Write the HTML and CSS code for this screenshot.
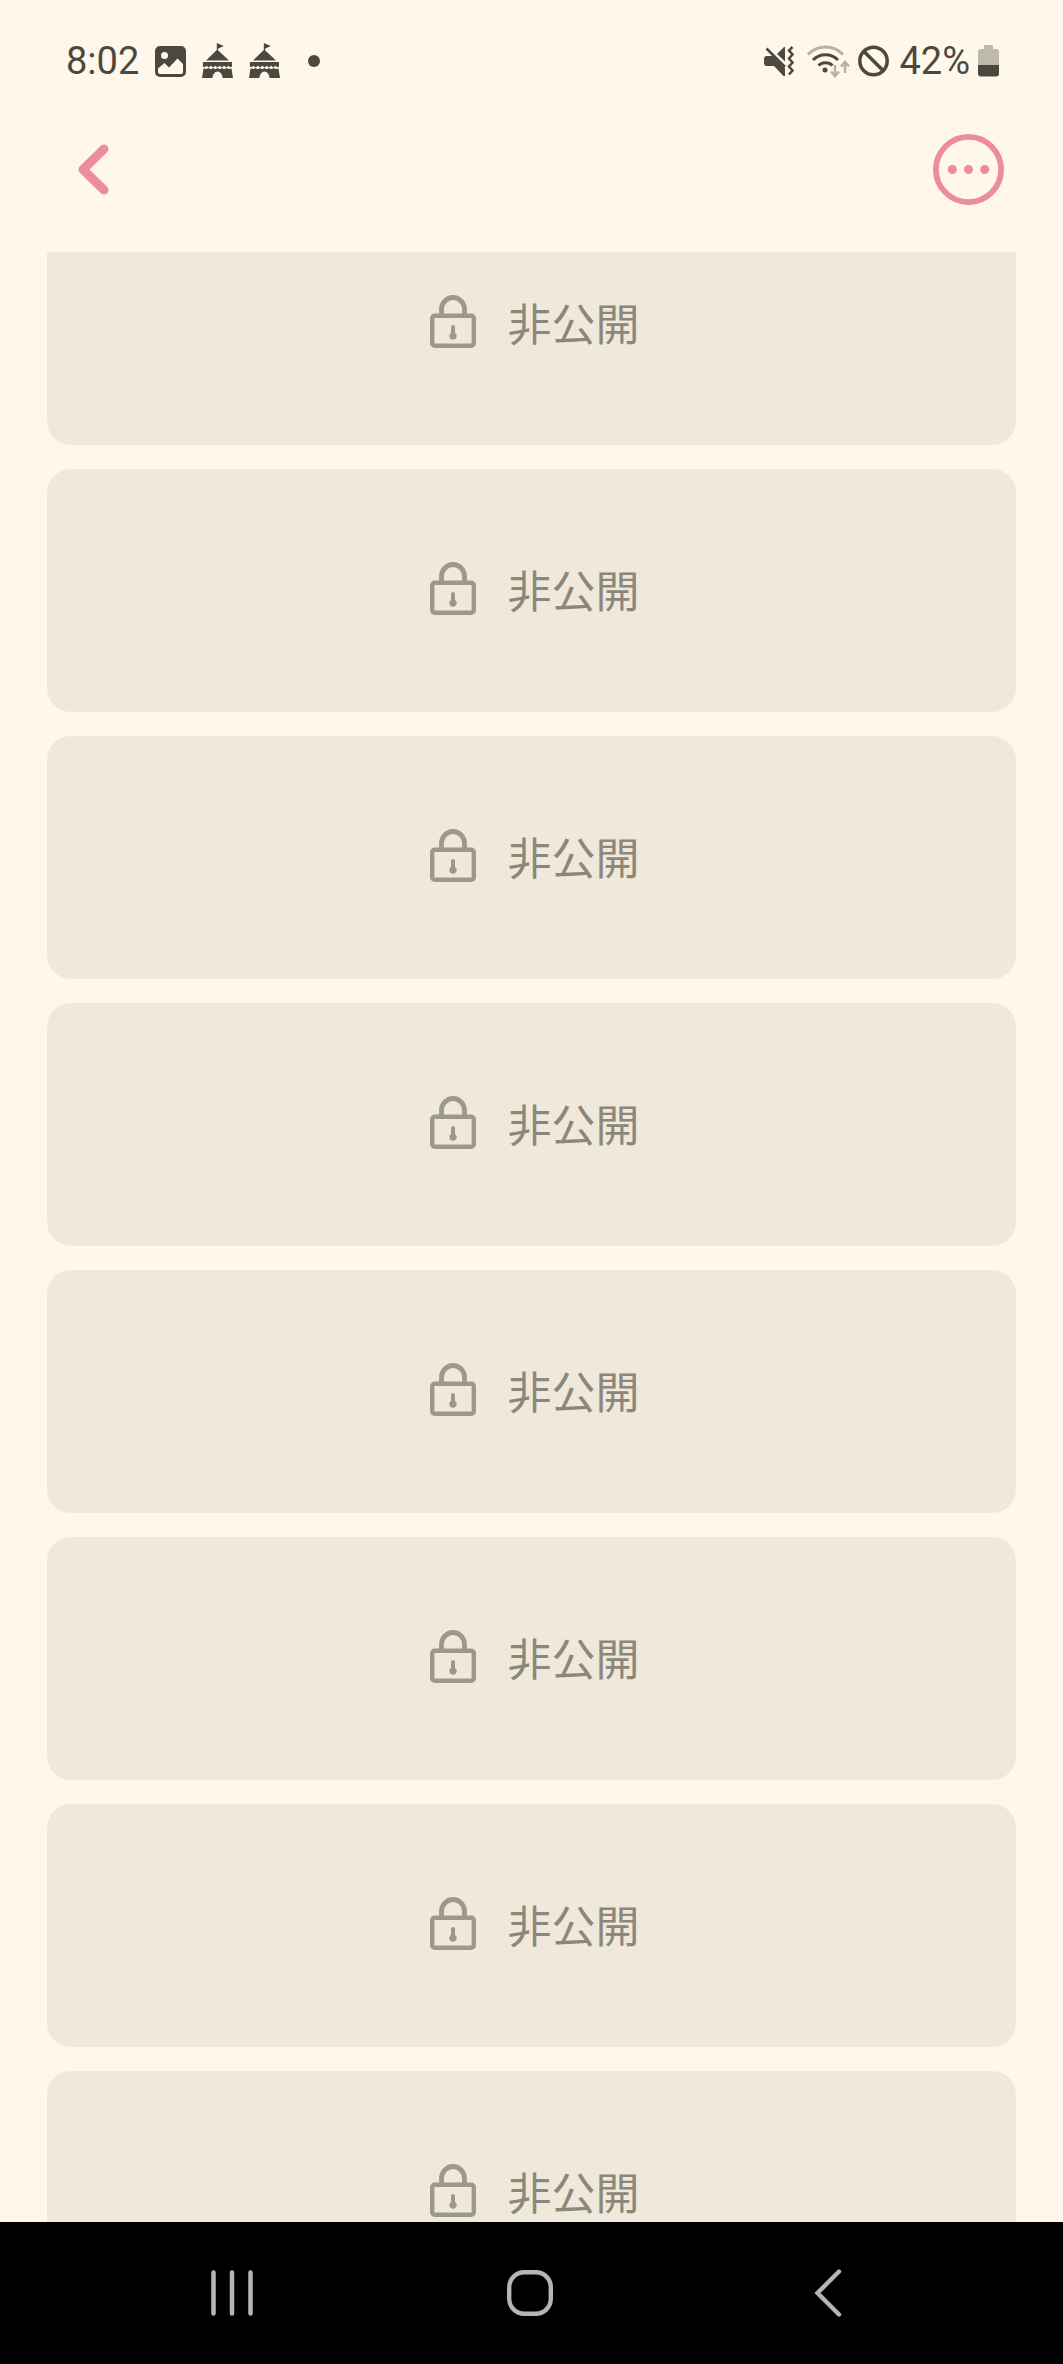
FILE: index.html
```html
<!DOCTYPE html>
<html lang="ja">
<head>
<meta charset="utf-8">
<meta name="viewport" content="width=device-width, initial-scale=1">
<title>非公開</title>
<link rel="stylesheet" href="styles.css">
</head>
<body>
<svg class="symbols" aria-hidden="true">
  <symbol id="lock" viewBox="0 0 46 53">
    <rect x="2.200" y="20.700" width="41.600" height="30" rx="2.500" fill="none" stroke="currentColor" stroke-width="4.400"/>
    <path d="M11.500 20v-5.500a11.500 12 0 0 1 23 0V20" fill="none" stroke="currentColor" stroke-width="4.800"/>
    <path d="M23 30a2 2 0 0 1 2 2v6a3.700 3.700 0 1 1-4 0v-6a2 2 0 0 1 2-2z" fill="currentColor"/>
  </symbol>
  <symbol id="tent" viewBox="0 0 31 36">
    <g fill="currentColor">
      <path d="M14.800 0l7 3-5.800 2.800v1.400l11 10.300h-23L14.800 7z"/>
      <path d="M1 19h29v4.500l-1.800.8-1.700-1.500-2.200 1.700-2.200-1.700-2.200 1.700-2.200-1.700-2.200 1.700-2.200-1.700-2.200 1.700-2.200-1.700-2.200 1.700-2.200-1.700-2 1.500-1.700-.8z"/>
      <path d="M1.500 25.500l3 .5 2-1 2.300 1.200 2.200-1.200 2.300 1.200 2.200-1.200 2.200 1.200 2.300-1.200 2.200 1.200 2.300-1.200 2 1 3-.5 1.500 9.500H20.500a5 6.500 0 0 0-10 0H0z"/>
    </g>
  </symbol>
</svg>
<div class="app">
  <div class="status">
    <div class="status-group">
      <span class="clock">8:02</span>
      <svg width="31" height="31" viewBox="0 0 31 31"><path fill="currentColor" fill-rule="evenodd" d="M5 0h21a5 5 0 0 1 5 5v21a5 5 0 0 1-5 5H5a5 5 0 0 1-5-5V5a5 5 0 0 1 5-5zM9.500 6a3.500 3.500 0 1 0 0 7 3.500 3.500 0 0 0 0-7zM3 22.500V26q0 2 2 2h21q2 0 2-2v-8l-5.500-5.500-8.500 9-4.500-4.500z"/></svg>
      <svg width="31" height="36"><use href="#tent"/></svg>
      <svg width="31" height="36"><use href="#tent"/></svg>
      <span class="more-dot"></span>
    </div>
    <div class="status-group status-right">
      <svg width="30" height="31" viewBox="0 0 30 31">
        <path fill="currentColor" d="M3 10h5.500L21 22.500V30h-1.500L10 20H3q-3 0-3-3v-4q0-3 3-3zM20 1h1v14.500L13 8z"/>
        <path fill="none" stroke="currentColor" stroke-width="2.500" d="M2.500 2.500L21 21M28.500 1l-3.500 3.500 3.500 4-3.500 4 3.500 4-3.500 4 3.500 4-3.500 4"/>
      </svg>
      <svg class="wifi" width="43" height="36" viewBox="0 0 43 36">
        <g fill="none" stroke="currentColor" stroke-width="3">
          <path class="faint" d="M1 11.500a24 24 0 0 1 35 0"/>
          <path d="M6 17a17.500 17.500 0 0 1 25 0"/>
          <path d="M11.500 22.500a10 10 0 0 1 14 0"/>
          <path class="faint" stroke-width="2.500" d="M28 22v11M24 28.500l4 4.500 4-4.500M38 30V19M34 23.500l4-4.500 4 4.500"/>
        </g>
        <circle cx="18" cy="27" r="2.500" fill="currentColor"/>
      </svg>
      <svg width="31" height="32" viewBox="0 0 31 32"><g fill="none" stroke="currentColor" stroke-width="3.500"><circle cx="15.500" cy="16" r="13.700"/><path d="M6 6.500l19 19"/></g></svg>
      <span class="percent">42%</span>
      <svg width="21" height="32" viewBox="0 0 21 32"><path class="battery-shell" d="M6 1q0-1 1-1h7q1 0 1 1v3h3q3 0 3 3v14H0V7q0-3 3-3h3z"/><path fill="currentColor" d="M0 20h21v8.500q0 3-3 3H3q-3 0-3-3z"/></svg>
    </div>
  </div>
  <header class="header">
    <button class="icon-button" aria-label="戻る"><svg width="31" height="51" viewBox="0 0 31 51"><path d="M26 5L5 25.500 26 46" fill="none" stroke="currentColor" stroke-width="9" stroke-linecap="round" stroke-linejoin="round"/></svg></button>
    <button class="icon-button" aria-label="メニュー"><svg width="71" height="71" viewBox="0 0 71 71"><circle cx="35.500" cy="35.500" r="32.600" fill="none" stroke="currentColor" stroke-width="5.800"/><g fill="currentColor"><circle cx="19.300" cy="35.500" r="4.500"/><circle cx="35.500" cy="35.500" r="4.500"/><circle cx="51.700" cy="35.500" r="4.500"/></g></svg></button>
  </header>
  <main class="viewport">
    <ul class="cards">
      <li class="card"><svg class="lock"><use href="#lock"/></svg><span>非公開</span></li>
      <li class="card"><svg class="lock"><use href="#lock"/></svg><span>非公開</span></li>
      <li class="card"><svg class="lock"><use href="#lock"/></svg><span>非公開</span></li>
      <li class="card"><svg class="lock"><use href="#lock"/></svg><span>非公開</span></li>
      <li class="card"><svg class="lock"><use href="#lock"/></svg><span>非公開</span></li>
      <li class="card"><svg class="lock"><use href="#lock"/></svg><span>非公開</span></li>
      <li class="card"><svg class="lock"><use href="#lock"/></svg><span>非公開</span></li>
      <li class="card"><svg class="lock"><use href="#lock"/></svg><span>非公開</span></li>
    </ul>
  </main>
  <nav class="navbar">
    <button class="icon-button" aria-label="履歴"><svg width="44" height="46" viewBox="0 0 44 46"><path d="M3.500 2.500v41M22 2.500v41M40.500 2.500v41" fill="none" stroke="currentColor" stroke-width="4.500" stroke-linecap="round"/></svg></button>
    <button class="icon-button" aria-label="ホーム"><svg width="46" height="46" viewBox="0 0 46 46"><rect x="2.200" y="2.200" width="41.600" height="41.600" rx="15" fill="none" stroke="currentColor" stroke-width="4.400"/></svg></button>
    <button class="icon-button" aria-label="戻る"><svg width="28" height="48" viewBox="0 0 28 48"><path d="M25 2.500L3.500 24 25 45.500" fill="none" stroke="currentColor" stroke-width="4.400" stroke-linecap="round"/></svg></button>
  </nav>
</div>
</body>
</html>
```
FILE: styles.css
```css
* {
  box-sizing: border-box;
}

body {
  margin: 0;
  background: #fff8ea;
  font-family: Roboto, "Noto Sans CJK JP", sans-serif;
}

svg {
  display: block;
  flex: none;
}

.symbols {
  position: absolute;
  width: 0;
  height: 0;
}

.app {
  display: flex;
  flex-direction: column;
  height: 100vh;
}

.status {
  display: flex;
  flex: none;
  justify-content: space-between;
  align-items: center;
  height: 122px;
  padding: 0 64px 0 66px;
  color: #4b493f;
  font-size: 38px;
  line-height: 44px;
}

.status-group {
  display: flex;
  align-items: center;
  gap: 16px;
}

.status-right {
  gap: 8px;
}

.wifi {
  margin-left: 5px;
}

.percent {
  margin-left: 2px;
}

.faint {
  opacity: 0.4;
}

.battery-shell {
  fill: #bdb9ad;
}

.more-dot {
  width: 12px;
  height: 12px;
  margin-left: 12px;
  border-radius: 50%;
  background: currentColor;
}

.header {
  display: flex;
  flex: none;
  justify-content: space-between;
  align-items: center;
  height: 94px;
  margin-bottom: 36px;
  padding: 0 59px 0 78px;
  color: #ec8d9b;
}

.icon-button {
  padding: 0;
  border: 0;
  background: none;
  color: inherit;
}

.viewport {
  flex: 1;
  min-height: 0;
  padding: 0 47px;
  overflow: hidden;
}

/* The list rests part-way through its first card. */
.cards {
  display: flex;
  flex-direction: column;
  gap: 24px;
  margin: -50px 0 0;
  padding: 0;
  list-style: none;
}

.card {
  display: flex;
  flex: none;
  justify-content: center;
  align-items: center;
  gap: 32px;
  height: 243px;
  padding: 0 0 4px 6px;
  border-radius: 24px;
  background: #efe8db;
  color: #8b8779;
  font-family: "Noto Sans CJK JP", sans-serif;
  font-size: 44px;
  line-height: 56px;
}

.lock {
  width: 46px;
  height: 53px;
  color: #9c998b;
}

.navbar {
  display: flex;
  flex: none;
  justify-content: space-between;
  align-items: center;
  height: 142px;
  padding: 0 203px 0 200px;
  background: #000;
  color: #b5b5b5;
}

.navbar .icon-button {
  display: flex;
  justify-content: center;
  width: 64px;
}
```
